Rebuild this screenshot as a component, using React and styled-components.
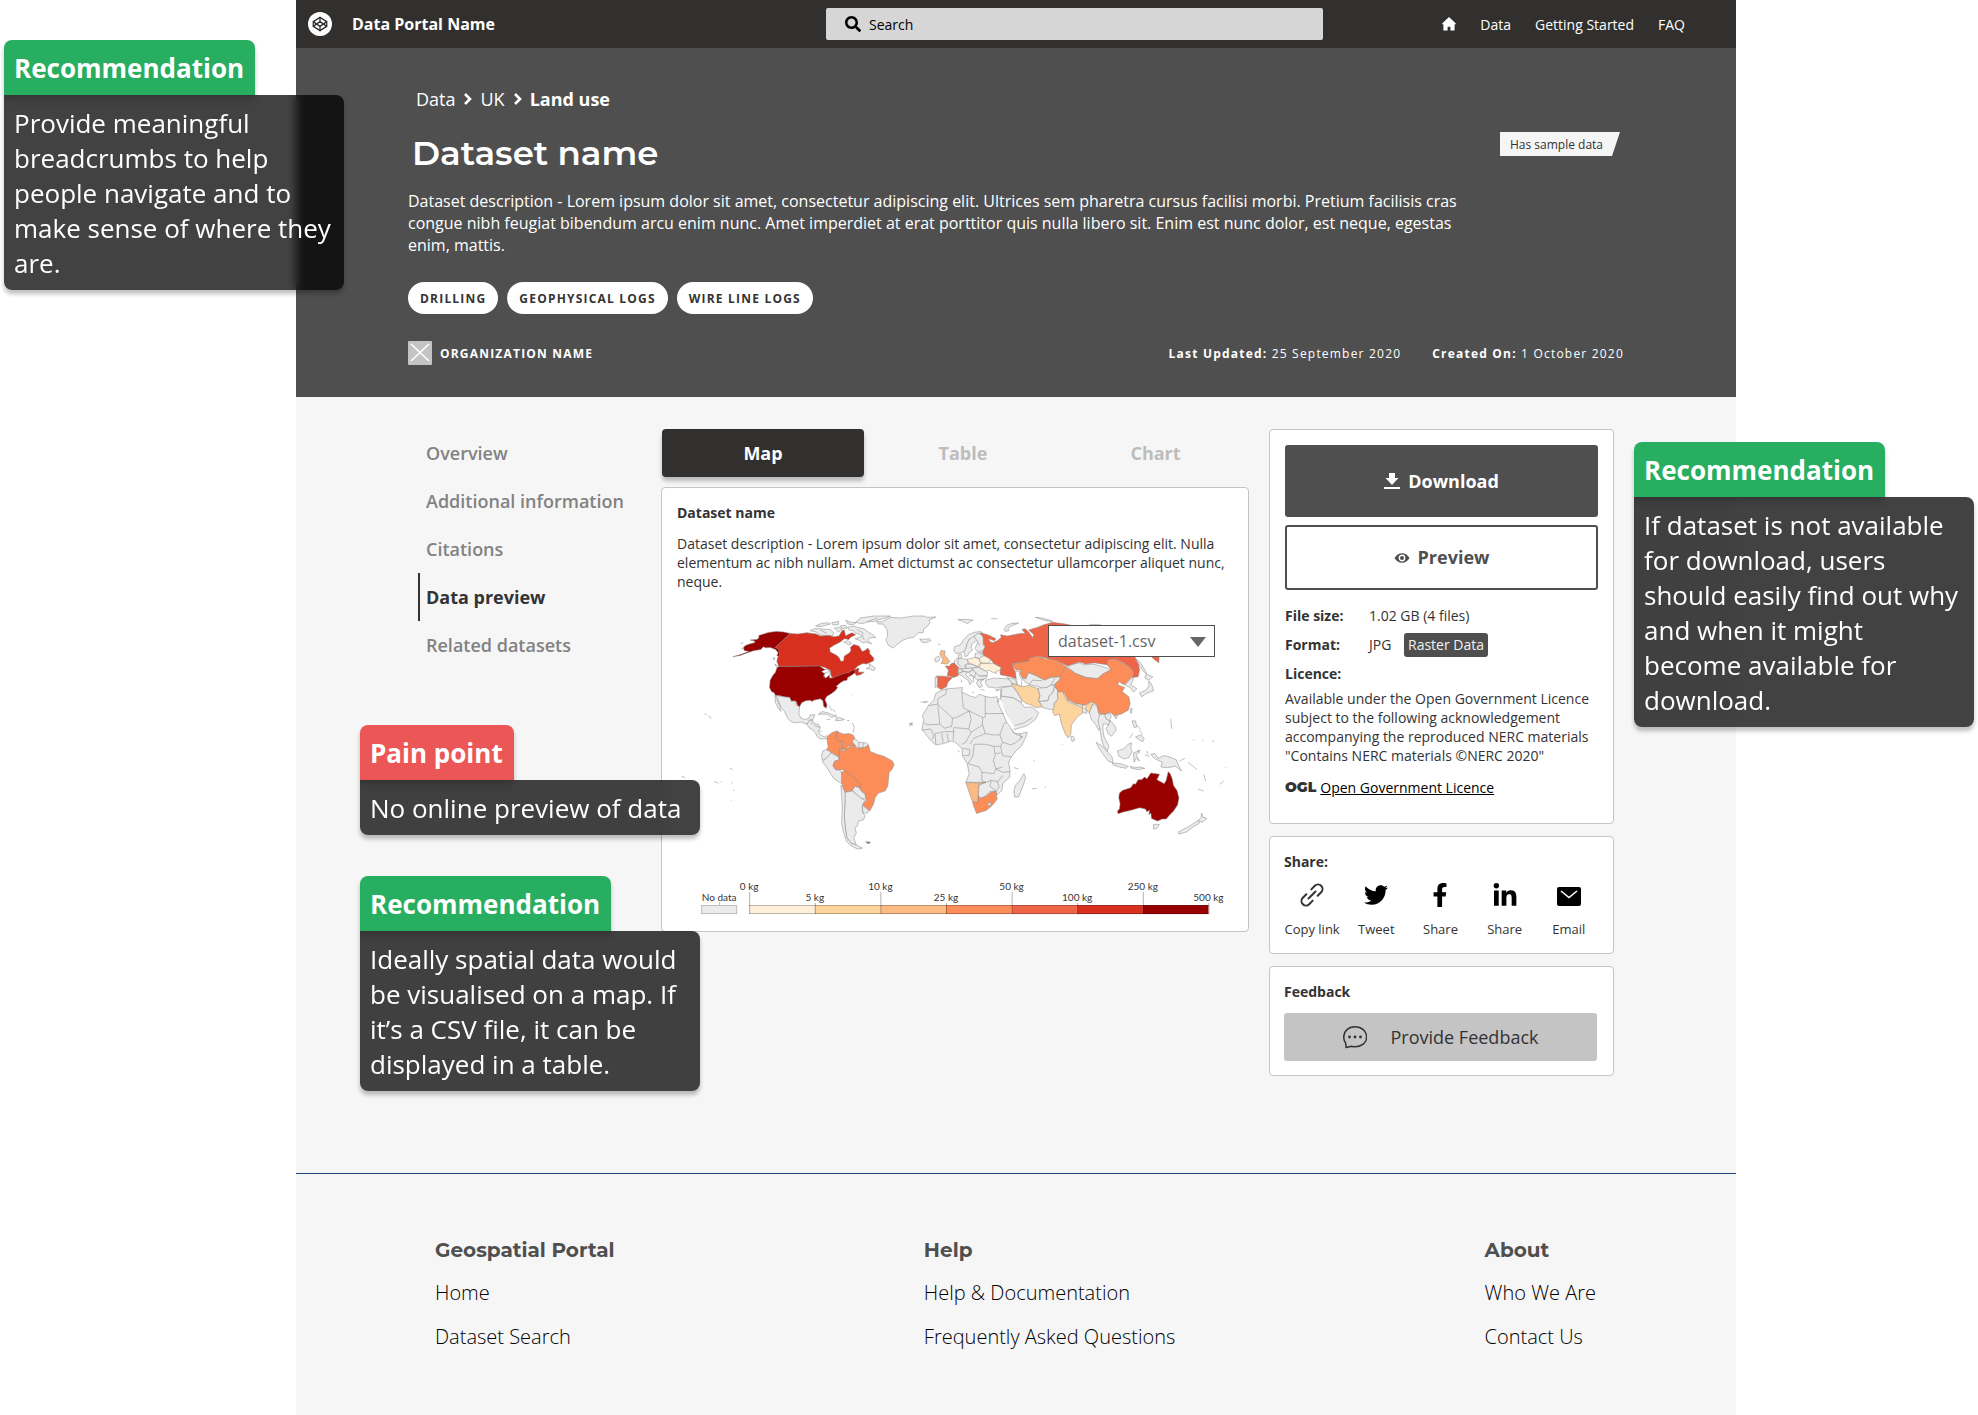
import React, { useState } from "react";
import styled, { createGlobalStyle } from "styled-components";
import { FiCodepen } from "react-icons/fi";
import {
  FaSearch,
  FaTwitter,
  FaFacebookF,
  FaLinkedinIn,
} from "react-icons/fa";

const headerLinks = ["Data", "Getting Started", "FAQ"];
const tags = ["Drilling", "Geophysical logs", "Wire line logs"];
const sections = [
  "Overview",
  "Additional information",
  "Citations",
  "Data preview",
  "Related datasets",
];
const tabs = ["Map", "Table", "Chart"];

const footerColumns = [
  { title: "Geospatial Portal", links: ["Home", "Dataset Search"] },
  {
    title: "Help",
    links: ["Help & Documentation", "Frequently Asked Questions"],
  },
  { title: "About", links: ["Who We Are", "Contact Us"] },
];

const legendColors = [
  "#fef0d9",
  "#fdd49e",
  "#fdbb84",
  "#fc8d59",
  "#ef6548",
  "#d7301f",
  "#990000",
];
const legendLabels = [
  "0 kg",
  "5 kg",
  "10 kg",
  "25 kg",
  "50 kg",
  "100 kg",
  "250 kg",
  "500 kg",
];

// 지도 데이터: 아메리카
const west = [
  // greenland, iceland, arctic islands
  ["#ebebeb", "648,94 664,96 690,82 720,84 760,78 790,78 800,82 826,81 806,90 808,98 800,110 790,116 788,128 774,128 760,142 744,144 728,150 712,162 698,174 684,166 676,148 682,140 680,118 668,102 654,102"],
  ["#ebebeb", "778,146 788,148 806,146 812,151 796,158 784,156"],
  ["#ebebeb", "586,96 600,84 640,78 690,78 670,86 650,90 640,95 624,94 610,100 598,100"],
  ["#ebebeb", "562,112 578,108 592,112 610,116 624,126 634,132 646,142 628,144 622,150 634,162 618,156 606,158 596,150 584,146 604,140 596,132 584,128 580,122 566,120"],
  ["#ebebeb", "450,122 462,116 480,116 496,118 510,118 520,128 518,136 498,137 478,134 468,126"],
  ["#ebebeb", "466,108 484,100 502,98 510,102 496,106 480,110"],
  ["#ebebeb", "514,98 535,94 534,104 518,105"],
  ["#ebebeb", "540,108 556,106 560,114 546,116"],
  ["#ebebeb", "522,114 538,112 545,118 534,126"],
  ["#ebebeb", "556,90 568,96 588,98 578,104 562,102"],
  ["#ebebeb", "550,156 562,152 574,160 566,165"],
  // canada
  ["#d7301f", "390,130 412,132 440,128 468,132 480,138 505,136 520,140 536,138 545,122 552,120 556,138 562,134 575,128 586,134 570,142 566,148 552,146 540,156 520,166 508,174 510,186 530,196 536,202 542,214 550,212 552,198 568,188 572,180 570,172 580,163 596,168 602,178 606,184 616,180 622,174 628,182 628,190 640,204 640,212 618,222 608,220 592,228 582,238 596,234 594,246 612,246 600,254 588,256 580,242 560,250 540,256 520,264 508,262 512,250 508,240 494,232 478,228 356,229 350,214 352,204 358,190 354,178 345,172"],
  ["#ebebeb", "618,236 628,230 626,220 634,226 645,234 640,242 628,236"],
  ["#ebebeb", "338,206 344,202 342,210"],
  ["#ebebeb", "344,222 356,230 352,234 346,228"],
  // alaska + usa
  ["#990000", "218,200 232,196 245,192 266,184 252,181 250,172 256,166 268,162 285,157 282,152 270,150 290,148 296,144 296,136 310,132 325,127 348,124 370,126 390,130 345,172 354,176 358,184 358,200 350,196 354,188 346,178 330,172 316,173 310,170 302,178 280,182 262,188 240,196"],
  ["#990000", "356,229 478,228 490,236 500,242 490,256 496,264 506,256 514,264 530,258 552,250 568,246 576,240 584,240 584,248 576,254 562,262 560,270 550,272 540,278 528,288 532,292 526,300 514,310 500,318 494,328 500,344 498,354 490,348 488,332 480,326 460,330 456,334 450,330 436,332 424,338 418,350 412,346 408,334 402,332 394,334 388,322 370,320 358,316 346,316 342,308 334,304 328,292 330,270 338,256 346,246 350,234"],
  // mexico, central america, caribbean
  ["#ebebeb", "344,316 370,320 388,322 394,334 402,332 410,346 418,350 416,370 422,384 434,388 446,384 450,374 464,374 458,388 448,390 440,402 424,396 404,398 392,394 382,384 374,366 362,350 354,330"],
  ["#ebebeb", "344,318 350,320 352,334 360,350 362,364 354,354 346,338"],
  ["#ebebeb", "440,402 448,390 456,390 454,400 474,402 480,412 474,424 480,434 492,440 500,436 502,444 492,446 480,446 470,438 466,428 456,418 446,412"],
  ["#ebebeb", "474,372 486,364 504,368 526,378 512,381 500,372 482,372"],
  ["#ebebeb", "528,384 538,382 552,388 540,391 526,391"],
  // south america
  ["#fc8d59", "524,424 532,422 530,432 526,444 534,452 546,452 546,464 550,476 540,480 536,500 528,498 520,490 498,480 504,470 500,446 504,436 514,428"],
  ["#fc8d59", "532,424 540,428 552,432 566,430 578,434 584,444 576,454 584,466 562,468 558,480 548,476 546,452 534,452 526,444"],
  ["#ebebeb", "582,444 596,456 618,458 624,464 620,472 610,474 596,474 584,466 576,454"],
  ["#ebebeb", "498,478 510,484 512,490 498,504 486,510 484,494 488,482"],
  ["#ebebeb", "512,488 536,500 536,508 522,514 518,526 526,538 540,540 546,552 544,580 522,566 512,552 500,532 486,514 498,504"],
  ["#fc8d59", "536,500 538,482 558,480 564,472 584,464 588,474 612,472 624,464 630,484 650,492 670,498 696,512 701,524 694,538 686,546 684,570 682,588 674,602 654,608 644,622 640,640 628,662 606,642 618,630 614,610 600,598 598,584 584,572 576,562 560,546 548,538 526,538 518,526 524,512 536,510"],
  ["#fc8d59", "544,546 556,540 566,552 584,562 598,582 600,592 584,588 576,602 554,606 548,594 544,572"],
  ["#ebebeb", "576,600 584,588 596,592 604,604 614,612 616,626 602,624"],
  ["#ebebeb", "554,606 576,602 602,624 614,630 606,644 606,664 614,676 610,688 594,692 592,706 584,712 588,728 580,742 588,762 572,758 560,742 556,720 552,680 554,640"],
  ["#ebebeb", "542,584 548,592 554,606 554,640 552,680 556,720 560,742 572,758 592,766 606,773 592,776 572,766 558,752 550,726 544,700 546,650"],
  ["#ebebeb", "606,646 624,658 622,668 608,668"],
  ["#777", "616,754 630,755 626,760 620,758"],
];

// 지도 데이터: 유럽, 아프리카, 아시아, 오세아니아
const east = [
  ["#ebebeb", "172,89 194,88 218,90 206,96 202,101 190,95"],
  ["#ebebeb", "310,118 318,106 334,100 354,99 332,108 322,116 324,122 314,124"],
  ["#ebebeb", "404,82 426,84 456,94 436,92"],
  // scandinavia + baltics
  ["#ebebeb", "160,182 162,170 180,164 190,148 204,134 220,127 240,124 248,130 240,134 232,130 220,142 206,148 200,160 196,176 190,184 176,190 166,190"],
  ["#ebebeb", "190,184 196,176 200,160 206,148 220,138 230,150 214,162 212,172 216,180 206,188 202,196 194,200"],
  ["#ebebeb", "220,138 232,130 246,134 250,150 248,166 254,172 246,182 230,184 224,176 228,164 232,156"],
  ["#ebebeb", "224,190 244,186 248,196 240,206 224,202"],
  ["#ebebeb", "172,196 182,192 184,202 176,207"],
  // western europe
  ["#fdbb84", "118,190 122,181 134,183 132,194 140,204 148,214 140,222 122,220 128,208 122,200"],
  ["#ebebeb", "102,206 112,198 118,202 116,212 106,216"],
  ["#ebebeb", "162,212 170,204 186,206 200,208 204,220 192,226 196,236 180,236 174,232 162,226"],
  ["#ef6548", "134,228 148,228 150,222 160,218 174,232 172,244 174,256 160,262 148,258 140,256 144,240"],
  ["#ebebeb", "104,262 112,262 112,276 110,290 104,292"],
  ["#ef6548", "106,258 130,258 156,262 142,276 138,290 122,298 112,292 112,262"],
  ["#ebebeb", "172,240 182,236 190,242 178,248"],
  ["#ebebeb", "182,238 196,234 212,232 218,240 204,246 190,244"],
  ["#ebebeb", "172,250 190,244 200,246 196,254 208,266 216,274 208,284 204,272 186,258"],
  ["#ebebeb", "196,222 214,222 232,230 214,234 196,234"],
  // eastern europe
  ["#fef0d9", "200,208 222,202 236,206 240,218 234,230 214,222 204,218"],
  ["#fef0d9", "236,206 250,196 264,200 270,208 264,220 240,218"],
  ["#fef0d9", "236,232 240,220 264,220 280,220 302,232 300,240 286,244 288,250 276,246 264,240 256,244"],
  ["#ebebeb", "214,234 234,232 254,242 262,248 260,256 236,258 224,248"],
  ["#ebebeb", "204,246 218,240 236,258 260,258 256,266 240,268 232,270 222,262 208,252"],
  ["#ebebeb", "232,270 250,268 240,276 246,288 236,292 228,280"],
  ["#ebebeb", "256,270 280,264 320,266 334,274 334,288 304,290 286,294 262,290 254,278"],
  ["#ebebeb", "320,262 344,268 350,284 336,280"],
  // russia
  ["#ef6548", "238,128 262,134 286,146 282,152 264,146 268,154 276,158 290,152 302,142 300,134 320,138 340,134 360,130 374,130 364,118 374,116 384,126 396,142 400,134 384,120 410,112 430,104 456,97 494,102 540,112 640,106 776,150 774,218 760,208 750,198 700,198 712,216 716,240 712,260 694,262 698,246 688,232 664,216 640,206 622,208 618,224 580,218 556,222 536,216 500,228 470,212 450,208 412,198 392,204 384,214 360,216 334,222 340,238 348,250 346,266 330,260 300,254 298,246 302,232 280,220 268,206 250,196 246,186 254,170 248,160 248,142"],
  ["#fc8d59", "334,224 360,216 384,214 386,204 412,198 436,208 450,206 470,212 496,230 484,248 484,260 450,262 432,270 404,256 384,248 376,266 364,262 358,250 362,240 346,240"],
  ["#ebebeb", "364,264 376,266 384,248 404,256 432,270 450,262 484,260 470,274 474,286 452,284 438,292 426,296 412,288 396,286 376,278"],
  ["#ffffff", "344,246 358,242 356,254 364,270 362,288 350,284 348,268"],
  // middle east
  ["#fdd49e", "334,280 350,284 362,290 384,286 410,294 418,316 414,330 426,350 404,352 392,344 376,340 364,330 348,304"],
  ["#ebebeb", "412,294 438,292 452,284 462,290 456,308 446,316 442,332 414,334 418,316"],
  ["#ebebeb", "462,290 474,300 470,312 472,326 460,340 462,356 450,358 426,352 416,334 442,332 446,316 456,308"],
  ["#ebebeb", "304,292 334,288 348,304 364,330 362,338 340,324 318,320 302,318"],
  ["#ebebeb", "300,318 318,320 340,324 362,338 372,352 392,350 400,356 414,368 404,388 380,406 342,418 334,404 318,370 302,344"],
  // asia
  ["#ebebeb", "500,228 536,218 548,224 580,222 600,228 632,238 606,252 590,266 556,262 524,250"],
  ["#fc8d59", "484,248 496,230 524,250 556,262 590,266 606,252 632,238 618,224 622,208 640,206 664,218 696,238 698,254 682,272 672,284 662,280 656,274 650,284 672,292 664,304 684,320 688,340 682,360 660,372 640,376 628,366 612,372 594,370 588,344 572,334 552,346 524,340 500,328 492,310 472,304 460,284 476,270"],
  ["#fdd49e", "470,306 486,304 496,328 522,342 546,348 546,368 530,380 512,404 510,432 502,443 494,432 482,400 476,372 462,376 456,366 462,340 472,326"],
  ["#fdd49e", "554,350 572,333 576,340 566,368 556,360"],
  ["#ebebeb", "500,328 524,340 546,344 540,350 520,342 500,334"],
  ["#ebebeb", "544,352 556,358 558,370 546,366"],
  ["#ebebeb", "510,438 518,438 522,450 514,454"],
  ["#ebebeb", "566,368 576,342 588,346 594,370 604,384 594,390 600,416 594,420 584,402 572,388"],
  ["#ebebeb", "596,374 612,372 616,386 628,392 624,404 608,400 606,416 610,440 624,466 620,484 608,466 602,446 598,420 592,394"],
  ["#ebebeb", "612,372 628,370 632,380 626,388 642,406 646,420 632,438 622,430 616,414 624,404 628,392 616,386"],
  ["#ebebeb", "586,456 604,468 618,482 634,500 636,518 622,512 606,490 594,472"],
  ["#ebebeb", "634,518 658,520 682,528 676,534 656,530 638,524"],
  ["#ebebeb", "650,482 668,476 682,462 692,458 690,474 694,484 684,502 670,506 654,498"],
  ["#ebebeb", "698,488 718,480 706,494 716,512 706,504 700,516"],
  ["#ebebeb", "688,528 704,532 718,530 732,534 712,538 692,534"],
  ["#ebebeb", "750,492 762,490 772,504 788,496 800,498 826,508 832,524 842,542 824,528 800,532 780,530 784,516 760,504"],
  ["#ebebeb", "694,392 704,392 708,410 700,412"],
  ["#ebebeb", "704,440 720,434 730,444 726,454 714,448"],
  ["#ebebeb", "688,356 694,354 692,370 688,366"],
  ["#ebebeb", "640,378 650,376 646,386"],
  ["#ebebeb", "672,284 692,264 698,266 690,284 708,296 698,306 688,292"],
  ["#ebebeb", "736,252 756,260 744,270 732,264"],
  ["#ebebeb", "744,272 752,282 758,302 740,308 722,320 716,308 736,300 744,286"],
  ["#ebebeb", "704,206 716,214 730,236 738,252 728,244 716,226"],
  // africa
  ["#ebebeb", "124,300 140,296 166,294 186,292 184,306 210,318 226,322 236,312 252,318 270,322 290,320 294,336 290,334 306,368 318,396 330,412 340,430 360,430 380,426 374,444 362,468 346,482 332,500 324,516 328,540 328,560 306,580 304,600 290,614 286,602 268,604 250,620 232,626 236,582 256,576 196,576 206,550 200,520 186,498 184,474 164,456 150,452 130,460 106,464 92,452 76,432 64,416 70,390 66,376 84,346 100,330 106,310"],
  ["#fdbb84", "196,576 232,578 256,576 240,582 234,584 232,636 216,634 206,606"],
  ["#fc8d59", "216,636 232,636 234,616 240,624 256,618 270,606 286,602 288,616 290,626 276,644 258,660 228,669 222,654"],
  ["#ebebeb", "260,640 270,636 272,644 264,646"],
  ["#ebebeb", "344,586 358,570 370,550 375,562 366,590 354,620 342,620 340,602"],
  // oceania
  ["#990000", "656,608 666,600 690,592 698,580 704,582 712,568 722,568 732,560 738,566 750,548 776,552 768,568 790,580 796,570 802,544 808,550 814,566 818,586 828,600 834,622 830,644 818,662 806,674 796,686 784,686 770,692 752,684 750,668 744,672 746,660 738,664 734,656 716,652 690,660 670,664 652,670 650,662 656,656 658,640 654,622"],
  ["#ebebeb", "758,702 776,702 768,714 758,716"],
  ["#ebebeb", "902,668 906,680 918,684 904,696 892,690 900,682"],
  ["#ebebeb", "892,690 896,698 876,710 858,724 834,731 832,725 864,708"],
];

// 아프리카 국경선과 작은 섬들
const eastBorders = [
  "M138 296L136 312L112 326L112 342L84 346M112 342L156 384L168 382L206 362L188 352L184 306M112 346L118 402L78 404L70 396M156 384L154 408L132 414L118 402M206 362L246 382L254 380L254 318M254 370L310 370M206 362L212 388L204 416L160 412L158 450M204 416L212 426L196 456L184 462M212 426L246 404L246 382M246 404L254 430L220 444L208 462M254 430L276 434L298 434L310 400L318 396M298 434L306 456L330 464L344 458L366 440L346 432M306 456L300 468L306 496L334 500M280 468L254 462L220 462L220 476L216 500L202 520M280 468L284 496L278 510L286 536L306 530M280 468L300 468M202 520L236 530L244 546L280 550L286 536L306 546L328 544M244 546L244 572L256 576L272 570L292 574L306 556M272 570L268 588L286 602L296 590L290 574M64 420L90 416L100 434L96 448M104 430L106 462M124 430L128 458M140 430L144 456M104 430L132 424L160 424M186 474L208 478L206 496L188 496",
  "M346 432L334 420M358 430L362 444M284 490L300 488M284 300L300 296L300 318M290 334L302 320M342 406L370 398L396 382M204 256L218 258L220 276M226 248L222 262M214 306L220 308M182 268L184 278M240 298L252 300M286 302L296 300M384 286L396 270L424 272M452 284L462 264M160 234L168 226M174 206L172 222L182 230M232 156L238 168M236 192L246 192",
  "M60 336L82 334M26 400L36 400M28 408L34 402M114 162L118 164M174 480L176 486M272 86L290 86M566 103L600 104M344 548L346 550M394 596L408 594M432 590L436 590M484 462L486 464M398 510L402 512M340 532L354 536M810 386L812 416M876 450L880 450M904 450L908 452M934 452L940 454M738 482L742 492M732 494L746 498M836 512L852 504M862 516L888 538M908 552L914 572M892 596L908 602M956 582L968 572M972 530L974 532M716 420L726 434M710 406L720 418M686 444L696 430M710 478L716 490",
];

const westBorders = [
  "M134 372L140 372M146 376L152 382L150 386M64 558L76 562M162 574L176 578M182 574L186 574M210 534L218 538M214 576L216 580M220 598L221 602M212 630L214 632M240 160L250 158M242 174L250 176M506 346L514 360M518 356L524 366M526 372L530 384M500 388L510 388M560 391L568 391M576 398L582 412L578 428M574 316L576 317M834 162L838 164M568 262L570 266M456 390L464 400M462 406L480 412M484 424L476 422M596 456L596 474M610 458L606 474M746 400L758 404M748 408L756 396M788 338L800 336M440 128L450 132M548 474L536 478M620 96L650 84M590 118L610 130M604 132L612 150M480 120L500 130",
];

const WorldMap = () => (
  <MapSvg viewBox="51 30 1665 800" role="img" aria-label="World map">
    <g stroke="#8a8a8a" strokeWidth="1.6" strokeLinejoin="round">
      {west.map(([fill, points]) => (
        <polygon key={points} fill={fill} points={points} />
      ))}
      {westBorders.map((d) => (
        <path key={d} d={d} fill="none" />
      ))}
      {/* great lakes */}
      <path
        d="M484 244L496 238L512 242L502 246L492 250ZM508 248L516 262L508 264ZM494 248L490 264"
        fill="#fff"
      />
    </g>
    <g
      transform="translate(720 0)"
      stroke="#8a8a8a"
      strokeWidth="1.6"
      strokeLinejoin="round"
    >
      {east.map(([fill, points]) => (
        <polygon key={points} fill={fill} points={points} />
      ))}
      {eastBorders.map((d) => (
        <path key={d} d={d} fill="none" />
      ))}
      {/* red sea */}
      <path d="M298 330L312 366L340 414" stroke="#fff" strokeWidth="6" fill="none" />
    </g>
  </MapSvg>
);

const Legend = () => (
  <LegendSvg viewBox="0 0 555 48" role="img" aria-label="Legend">
    <rect x="24.5" y="33.5" width="35" height="8" fill="#ebebeb" stroke="#bdbdbd" />
    <path d="M42.5 30V33" stroke="#bdbdbd" />
    <text x="42" y="29" textAnchor="middle">
      No data
    </text>
    {legendColors.map((color, i) => (
      <rect
        key={color}
        x={72 + i * 65.5}
        y="33"
        width="65.5"
        height="9"
        fill={color}
      />
    ))}
    <path d="M72 33.5H531M72 41.5H531" stroke="#000" strokeOpacity="0.25" />
    {legendLabels.map((label, i) => (
      <g key={label}>
        <path
          d={`M${72.5 + i * 65.5} ${i % 2 ? 31 : 20}V42`}
          stroke="#000"
          strokeOpacity="0.3"
        />
        <text x={72 + i * 65.5} y={i % 2 ? 29 : 18} textAnchor="middle">
          {label}
        </text>
      </g>
    ))}
  </LegendSvg>
);

const HomeIcon = () => (
  <svg width="14" height="14" viewBox="0 0 14 14" fill="currentColor">
    <path d="M7 0L0.4 6.2Q-0.3 7.4 1.4 7.4V13Q1.4 13.6 2 13.6H5.6V9.8H8.4V13.6H12Q12.6 13.6 12.6 13V7.4Q14.3 7.4 13.6 6.2Z" />
  </svg>
);

const CrumbArrow = () => (
  <svg width="9" height="12" viewBox="0 0 9 12">
    <path d="M2 1L7 6L2 11" fill="none" stroke="currentColor" strokeWidth="2.600" />
  </svg>
);

const DownloadIcon = () => (
  <svg width="16" height="16" viewBox="0 0 16 16" fill="currentColor">
    <path d="M5 0H11V5H14.5L8 12L1.500 5H5ZM0 14H16V16H0Z" />
  </svg>
);

const EyeIcon = () => (
  <svg width="16" height="16" viewBox="0 0 16 16">
    <path
      d="M0.500 8Q3.200 3.200 8 3.200T15.500 8Q12.800 12.800 8 12.800T0.500 8Z"
      fill="currentColor"
    />
    <circle cx="8" cy="8" r="2.700" fill="none" stroke="#fff" strokeWidth="1.400" />
  </svg>
);

const LinkIcon = () => (
  <svg
    width="24"
    height="24"
    viewBox="0 0 24 24"
    fill="none"
    stroke="#333"
    strokeWidth="2"
    strokeLinecap="round"
  >
    <g transform="rotate(-45 12 12)">
      <path d="M8.500 7.500H3.500A4.500 4.500 0 0 0 3.500 16.500H8.500" />
      <path d="M15.500 7.500H20.500A4.500 4.500 0 0 1 20.500 16.500H15.500" />
      <path d="M7 12H17" />
    </g>
  </svg>
);

const MailIcon = () => (
  <svg width="24" height="24" viewBox="0 0 24 24">
    <rect x="0" y="4" width="24" height="19" rx="2" fill="#000" />
    <path d="M4 8L12 14.500L20 8" fill="none" stroke="#fff" strokeWidth="1.600" />
  </svg>
);

const ChatIcon = () => (
  <svg width="24" height="24" viewBox="0 0 24 24">
    <path
      d="M3 22.500C3.200 21 3 19.500 2.400 17.500C1.200 15.800 0.700 14 0.700 12C0.700 6 5.500 1.700 12 1.700S23.600 6 23.600 12S18.500 21.800 12 21.800C10.500 21.800 9.500 21.500 8.500 21.200C6.800 21.800 5 22.300 3 22.500Z"
      fill="none"
      stroke="#333"
      strokeWidth="1.500"
      strokeLinejoin="round"
    />
    <circle cx="6.500" cy="12" r="1.400" fill="#333" />
    <circle cx="12" cy="12" r="1.400" fill="#333" />
    <circle cx="17.500" cy="12" r="1.400" fill="#333" />
  </svg>
);

const shareItems = [
  { id: "copy", label: "Copy link", icon: <LinkIcon /> },
  { id: "tweet", label: "Tweet", icon: <FaTwitter size={24} /> },
  { id: "facebook", label: "Share", icon: <FaFacebookF size={24} /> },
  { id: "linkedin", label: "Share", icon: <FaLinkedinIn size={26} /> },
  { id: "email", label: "Email", icon: <MailIcon /> },
];

const Note = ({ title, children, ...position }) => (
  <NoteBox {...position}>
    <NoteTitle $tone={position.$tone}>{title}</NoteTitle>
    <NoteBody>{children}</NoteBody>
  </NoteBox>
);

const App = () => {
  const [tab, setTab] = useState("Map");
  const [keyword, setKeyword] = useState("");
  const [file, setFile] = useState("dataset-1.csv");

  // handler
  const searchChangeHandler = (e) => {
    setKeyword(e.target.value);
  };
  const fileChangeHandler = (e) => {
    setFile(e.target.value);
  };

  return (
    <>
      <GlobalStyle />
      <Canvas>
        <Page>
          <TopBar>
            <Brand href="#">
              <Logo>
                <FiCodepen size={16} />
              </Logo>
              Data Portal Name
            </Brand>
            <SearchBox>
              <FaSearch size={16} />
              <SearchInput
                type="search"
                aria-label="Search"
                placeholder="Search"
                value={keyword}
                onChange={searchChangeHandler}
              />
            </SearchBox>
            <TopNav>
              <TopLink href="#" aria-label="Home">
                <HomeIcon />
              </TopLink>
              {headerLinks.map((link) => (
                <TopLink href="#" key={link}>
                  {link}
                </TopLink>
              ))}
            </TopNav>
          </TopBar>

          <Hero>
            <Breadcrumb aria-label="Breadcrumb">
              <Crumb href="#">Data</Crumb>
              <CrumbArrow />
              <Crumb href="#">UK</Crumb>
              <CrumbArrow />
              <Crumb href="#" $current>
                Land use
              </Crumb>
            </Breadcrumb>
            <TitleRow>
              <Title>Dataset name</Title>
              <SampleTag>Has sample data</SampleTag>
            </TitleRow>
            <Lead>
              Dataset description - Lorem ipsum dolor sit amet, consectetur
              adipiscing elit. Ultrices sem pharetra cursus facilisi morbi.
              Pretium facilisis cras congue nibh feugiat bibendum arcu enim
              nunc. Amet imperdiet at erat porttitor quis nulla libero sit. Enim
              est nunc dolor, est neque, egestas enim, mattis.
            </Lead>
            <TagList>
              {tags.map((tag) => (
                <Tag href="#" key={tag}>
                  {tag}
                </Tag>
              ))}
            </TagList>
            <MetaRow>
              <Organization>
                <svg width="24" height="24" viewBox="0 0 24 24">
                  <rect width="24" height="24" rx="1" fill="#c4c4c4" />
                  <path d="M3 3L21 20M21 3L3 20" stroke="#fff" strokeWidth="1.600" />
                </svg>
                Organization name
              </Organization>
              <Dates>
                <span>
                  <b>Last Updated:</b> 25 September 2020
                </span>
                <span>
                  <b>Created On:</b> 1 October 2020
                </span>
              </Dates>
            </MetaRow>
          </Hero>

          <Content>
            <SideNav>
              {sections.map((section) => (
                <SideLink
                  href="#"
                  key={section}
                  $active={section === "Data preview"}
                >
                  {section}
                </SideLink>
              ))}
            </SideNav>

            <Preview>
              <Tabs role="tablist">
                {tabs.map((name) => (
                  <Tab
                    key={name}
                    role="tab"
                    aria-selected={tab === name}
                    $active={tab === name}
                    onClick={() => setTab(name)}
                  >
                    {name}
                  </Tab>
                ))}
              </Tabs>
              <MapCard>
                <SmallTitle>Dataset name</SmallTitle>
                <MapText>
                  Dataset description - Lorem ipsum dolor sit amet, consectetur
                  adipiscing elit. Nulla elementum ac nibh nullam. Amet dictumst
                  ac consectetur ullamcorper aliquet nunc, neque.
                </MapText>
                <MapArea>
                  <WorldMap />
                  <FilePicker>
                    <FileSelect
                      aria-label="Data file"
                      value={file}
                      onChange={fileChangeHandler}
                    >
                      <option>dataset-1.csv</option>
                    </FileSelect>
                    <svg width="16" height="10" viewBox="0 0 16 10">
                      <path d="M0 0H16L8 10Z" fill="#666" />
                    </svg>
                  </FilePicker>
                </MapArea>
                <Legend />
              </MapCard>
            </Preview>

            <Aside>
              <DownloadCard>
                <DownloadButton>
                  <DownloadIcon />
                  Download
                </DownloadButton>
                <PreviewButton>
                  <EyeIcon />
                  Preview
                </PreviewButton>
                <Facts>
                  <dt>File size:</dt>
                  <dd>1.02 GB (4 files)</dd>
                  <dt>Format:</dt>
                  <dd>
                    JPG <Chip>Raster Data</Chip>
                  </dd>
                  <dt>Licence:</dt>
                </Facts>
                <LicenceText>
                  Available under the Open Government Licence subject to the
                  following acknowledgement accompanying the reproduced NERC
                  materials "Contains NERC materials ©NERC 2020"
                </LicenceText>
                <LicenceLink>
                  <b>OGL</b>
                  <a href="#">Open Government Licence</a>
                </LicenceLink>
              </DownloadCard>

              <SmallCard>
                <SmallTitle>Share:</SmallTitle>
                <ShareRow>
                  {shareItems.map((item) => (
                    <ShareButton key={item.id}>
                      {item.icon}
                      {item.label}
                    </ShareButton>
                  ))}
                </ShareRow>
              </SmallCard>

              <SmallCard>
                <SmallTitle>Feedback</SmallTitle>
                <FeedbackButton>
                  <ChatIcon />
                  Provide Feedback
                </FeedbackButton>
              </SmallCard>
            </Aside>
          </Content>

          <Footer>
            {footerColumns.map((column) => (
              <FooterColumn key={column.title}>
                <FooterTitle>{column.title}</FooterTitle>
                {column.links.map((link) => (
                  <FooterLink href="#" key={link}>
                    {link}
                  </FooterLink>
                ))}
              </FooterColumn>
            ))}
          </Footer>

          <Note title="Recommendation" $top={40} $left={-292}>
            Provide meaningful breadcrumbs to help people navigate and to make
            sense of where they are.
          </Note>
          <Note title="Pain point" $tone="#eb5757" $top={725} $left={64}>
            No online preview of data
          </Note>
          <Note title="Recommendation" $top={876} $left={64}>
            Ideally spatial data would be visualised on a map. If it’s a CSV
            file, it can be displayed in a table.
          </Note>
          <Note title="Recommendation" $top={442} $right={-238}>
            If dataset is not available for download, users should easily find
            out why and when it might become available for download.
          </Note>
        </Page>
      </Canvas>
    </>
  );
};

export default App;

//스타일

const GlobalStyle = createGlobalStyle`
  * {
    box-sizing: border-box;
  }
  body {
    margin: 0;
    background: #fff;
    color: #333;
    font-family: "Open Sans", sans-serif;
    font-size: 14px;
    line-height: 19px;
  }
  a {
    color: inherit;
    text-decoration: none;
  }
  h1, h2, h3, p, dl, dd {
    margin: 0;
  }
  button, input, select {
    font: inherit;
    color: inherit;
    border: none;
    padding: 0;
  }
  button {
    cursor: pointer;
  }
  svg {
    flex: none;
  }
`;

const Canvas = styled.div`
  padding: 0 242px 0 296px;
  overflow-x: hidden;
`;

const Page = styled.div`
  position: relative;
  min-height: 100vh;
  background: #f6f6f6;
`;

const TopBar = styled.header`
  display: grid;
  grid-template-columns: 518px minmax(0, 1fr) 401px;
  align-items: center;
  height: 48px;
  padding: 0 12px;
  background: #32302e;
  color: #fff;
`;

const Brand = styled.a`
  display: flex;
  align-items: center;
  gap: 20px;
  font-size: 16px;
  font-weight: 700;
`;

const Logo = styled.span`
  display: flex;
  align-items: center;
  justify-content: center;
  width: 24px;
  height: 24px;
  border-radius: 50%;
  background: #fff;
  color: #32302e;
`;

const SearchBox = styled.label`
  display: flex;
  align-items: center;
  gap: 8px;
  height: 32px;
  padding: 0 19px;
  border-radius: 2px;
  background: #d6d6d6;
  color: #000;
`;

const SearchInput = styled.input`
  flex: 1;
  min-width: 0;
  background: transparent;
  &::placeholder {
    color: #000;
    opacity: 1;
  }
  &:focus {
    outline: none;
  }
`;

const TopNav = styled.nav`
  display: flex;
  align-items: center;
  justify-content: flex-end;
  gap: 24px;
  padding-right: 39px;
`;

const TopLink = styled.a`
  display: flex;
`;

const Hero = styled.section`
  padding: 40px 112px 32px;
  background: #4f4f4f;
  color: #fff;
`;

const Breadcrumb = styled.nav`
  display: flex;
  align-items: center;
  gap: 8px;
  padding-left: 8px;
  line-height: 22px;
`;

const Crumb = styled.a`
  font-size: 18px;
  font-weight: ${({ $current }) => ($current ? 700 : 400)};
`;

const TitleRow = styled.div`
  display: flex;
  justify-content: space-between;
  padding: 22px 4px 0;
`;

const Title = styled.h1`
  font-family: Montserrat, "Open Sans", sans-serif;
  font-size: 34px;
  font-weight: 600;
  line-height: 42px;
`;

const SampleTag = styled.span`
  height: 24px;
  padding: 0 17px 0 10px;
  background: #f5f5f5;
  color: #333;
  font-size: 12px;
  line-height: 25px;
  clip-path: polygon(0 0, 100% 0, calc(100% - 8px) 100%, 0 100%);
`;

const Lead = styled.p`
  max-width: 1060px;
  margin-top: 16px;
  font-size: 16px;
  line-height: 22px;
`;

const TagList = styled.div`
  display: flex;
  gap: 9px;
  margin-top: 26px;
`;

const Tag = styled.a`
  height: 32px;
  padding: 0 12px;
  border-radius: 16px;
  background: #fff;
  color: #333;
  font-size: 12px;
  font-weight: 700;
  line-height: 34px;
  letter-spacing: 0.1em;
  text-transform: uppercase;
`;

const MetaRow = styled.div`
  display: flex;
  align-items: center;
  justify-content: space-between;
  margin-top: 27px;
  font-size: 12px;
  letter-spacing: 0.1em;
`;

const Organization = styled.div`
  display: flex;
  align-items: center;
  gap: 8px;
  font-weight: 700;
  text-transform: uppercase;
`;

const Dates = styled.div`
  display: flex;
  gap: 31px;
`;

const Content = styled.main`
  display: grid;
  grid-template-columns: 223px minmax(0, 1fr) 345px;
  gap: 20px;
  padding: 32px 122px 97px;
`;

const SideNav = styled.nav`
  display: flex;
  flex-direction: column;
`;

const SideLink = styled.a`
  padding-left: 6px;
  border-left: 2px solid ${({ $active }) => ($active ? "#333" : "transparent")};
  color: ${({ $active }) => ($active ? "#333" : "#828282")};
  font-size: 18px;
  font-weight: ${({ $active }) => ($active ? 700 : 600)};
  line-height: 48px;
`;

const Preview = styled.section`
  display: flex;
  flex-direction: column;
  align-items: stretch;
`;

const Tabs = styled.div`
  display: grid;
  grid-template-columns: 202px 198px 1fr;
  margin-bottom: 10px;
  padding-left: 1px;
`;

const Tab = styled.button`
  height: 48px;
  border-radius: 4px;
  background: ${({ $active }) => ($active ? "#32302e" : "transparent")};
  color: ${({ $active }) => ($active ? "#fff" : "#bdbdbd")};
  box-shadow: ${({ $active }) =>
    $active ? "0 4px 4px rgba(0, 0, 0, 0.25)" : "none"};
  font-size: 18px;
  font-weight: 700;
`;

const Card = styled.section`
  padding: 15px;
  border: 1px solid #c4c4c4;
  border-radius: 4px;
  background: #fff;
`;

const MapCard = styled(Card)`
  padding-bottom: 11px;
`;

const SmallTitle = styled.h2`
  font-size: 14px;
  font-weight: 700;
  line-height: 20px;
`;

const MapText = styled.p`
  margin-top: 11px;
`;

const MapArea = styled.div`
  position: relative;
  margin-top: 9px;
`;

const MapSvg = styled.svg`
  display: block;
  width: 100%;
`;

const LegendSvg = styled.svg`
  display: block;
  width: 100%;
  margin-top: 5px;
  font-family: Lato, sans-serif;
  font-size: 10px;
  fill: #333;
`;

const FilePicker = styled.div`
  position: absolute;
  top: 25px;
  right: 18px;
  width: 167px;
  height: 32px;
  svg {
    position: absolute;
    top: 12px;
    right: 9px;
    pointer-events: none;
  }
`;

const FileSelect = styled.select`
  width: 100%;
  height: 100%;
  padding: 0 9px;
  border: 1px solid #4f4f4f;
  appearance: none;
  background: #fff;
  color: #666;
  font-size: 16px;
`;

const Aside = styled.aside`
  display: flex;
  flex-direction: column;
  gap: 12px;
`;

const DownloadCard = styled(Card)`
  padding-bottom: 26px;
`;

const DownloadButton = styled.button`
  display: flex;
  align-items: center;
  justify-content: center;
  gap: 8px;
  width: 100%;
  height: 72px;
  border-radius: 3px;
  background: #4f4f4f;
  color: #fff;
  font-size: 18px;
  font-weight: 700;
`;

const PreviewButton = styled(DownloadButton)`
  height: 65px;
  margin-top: 8px;
  border: 2px solid #4f4f4f;
  background: #fff;
  color: #4f4f4f;
`;

const Facts = styled.dl`
  display: grid;
  grid-template-columns: 84px 1fr;
  align-items: center;
  row-gap: 5px;
  margin-top: 14px;
  line-height: 24px;
  dt {
    font-weight: 700;
  }
`;

const Chip = styled.span`
  display: inline-block;
  margin-left: 9px;
  padding: 0 4px;
  border-radius: 3px;
  background: #4f4f4f;
  color: #f2f2f2;
`;

const LicenceText = styled.p`
  margin-top: 3px;
`;

const LicenceLink = styled.p`
  display: flex;
  align-items: center;
  gap: 4px;
  margin-top: 13px;
  b {
    font-family: Montserrat, Inter, sans-serif;
    font-size: 14px;
    font-weight: 900;
  }
  a {
    color: #000;
    text-decoration: underline;
  }
`;

const SmallCard = styled(Card)`
  padding: 15px 16px 14px 14px;
`;

const ShareRow = styled.div`
  display: grid;
  grid-template-columns: repeat(5, 1fr);
  margin: 11px -4px 0;
`;

const ShareButton = styled.button`
  display: flex;
  flex-direction: column;
  align-items: center;
  justify-content: space-between;
  height: 56px;
  background: none;
  font-size: 13px;
  svg {
    color: #000;
  }
`;

const FeedbackButton = styled.button`
  display: flex;
  align-items: center;
  justify-content: center;
  gap: 24px;
  width: 100%;
  height: 48px;
  margin-top: 11px;
  border-radius: 3px;
  background: #c4c4c4;
  font-size: 18px;
`;

const Footer = styled.footer`
  display: flex;
  justify-content: space-between;
  padding: 65px 140px 56px 139px;
  border-top: 1px solid #1d4480;
`;

const FooterColumn = styled.div`
  display: flex;
  flex-direction: column;
  gap: 20px;
`;

const FooterTitle = styled.h2`
  font-family: Montserrat, "Open Sans", sans-serif;
  color: #4f4f4f;
  font-size: 20px;
  font-weight: 700;
  line-height: 22px;
`;

const FooterLink = styled.a`
  color: #000;
  font-size: 20px;
  font-weight: 300;
  line-height: 24px;
`;

const NoteBox = styled.aside`
  position: absolute;
  top: ${({ $top }) => $top}px;
  left: ${({ $left }) => ($left === undefined ? "auto" : `${$left}px`)};
  right: ${({ $right }) => ($right === undefined ? "auto" : `${$right}px`)};
  width: 340px;
  color: #fff;
  font-size: 26px;
  line-height: 35px;
`;

const NoteTitle = styled.h3`
  width: fit-content;
  padding: 11px 11px 9px 10px;
  border-radius: 8px 8px 0 0;
  background: ${({ $tone }) => $tone || "#27ae60"};
  box-shadow: 0 4px 4px rgba(0, 0, 0, 0.25);
  font-size: 26px;
  font-weight: 700;
`;

const NoteBody = styled.p`
  position: relative;
  padding: 11px 10px 9px;
  border-radius: 0 8px 8px 8px;
  background: rgba(0, 0, 0, 0.74);
  box-shadow: 0 4px 4px rgba(0, 0, 0, 0.25);
  backdrop-filter: blur(4px);
`;
